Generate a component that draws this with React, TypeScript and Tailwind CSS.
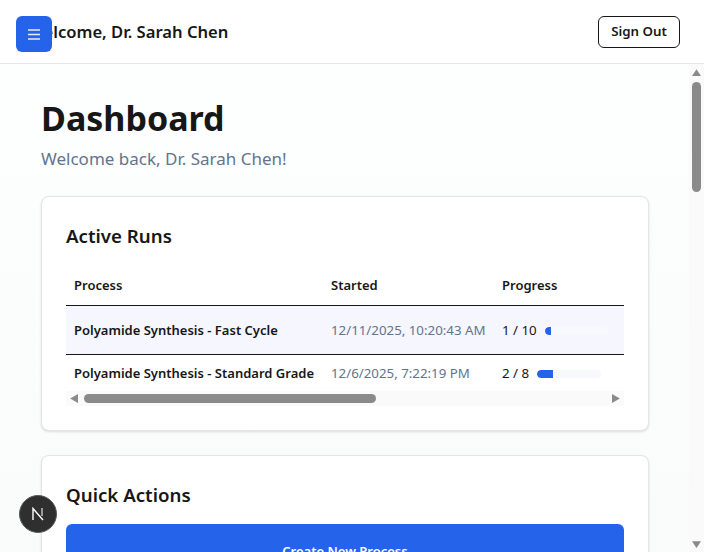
import React from 'react';

type Run = {
  name: string;
  started: string;
  done: number;
  total: number;
};

const runs: Run[] = [
  { name: 'Polyamide Synthesis - Fast Cycle', started: '12/11/2025, 10:20:43 AM', done: 1, total: 10 },
  { name: 'Polyamide Synthesis - Standard Grade', started: '12/6/2025, 7:22:19 PM', done: 2, total: 8 },
];

const Arrow = ({ points, className }: { points: string; className: string }) => (
  <svg viewBox="0 0 8 8" className={className} fill="#8a8a8a">
    <polygon points={points} />
  </svg>
);

const App = () => {
  return (
    <div className="relative h-[552px] w-[704px] overflow-hidden bg-white font-['Noto_Sans','Liberation_Sans',sans-serif] text-[#171717]">
      {/* Menu button */}
      <button className="absolute left-4 top-4 z-10 flex h-9 w-9 items-center justify-center rounded-md bg-[#2563eb]">
        <svg viewBox="0 0 12 11" className="h-[11px] w-3" stroke="#e8ecff" strokeWidth="1.3">
          <path d="M0 1h12M0 5.5h12M0 10h12" />
        </svg>
      </button>

      {/* Next badge */}
      <div className="absolute left-[19px] top-[495px] z-10 flex h-[38px] w-[38px] items-center justify-center rounded-full border border-[#5a5a5a] bg-[#2f2f2f]">
        <svg viewBox="0 0 14 14" className="h-[14px] w-[14px]" fill="none">
          <path d="M2 13V1.5L12 13" stroke="#ffffff" strokeWidth="1.4" />
          <path d="M11 1v8" stroke="#c9c9c9" strokeWidth="1.4" />
        </svg>
      </div>

      <header className="flex h-16 items-center justify-between border-b border-[#e5e5e5] pl-7 pr-6">
        <h2 className="pt-0.5 text-[16.6px] font-semibold">Welcome, Dr. Sarah Chen</h2>
        <button className="h-8 w-[82px] rounded-md border border-[#171717] text-[13.3px] font-semibold">Sign Out</button>
      </header>

      <div className="flex h-[488px]">
        <main className="w-[689px] overflow-hidden bg-linear-to-b from-[#fdfefe] to-[#fafbfb] pl-[41px] pr-10 pt-[34px]">
          <h1 className="text-[34px] font-bold leading-10">Dashboard</h1>
          <p className="mt-[7px] text-[17px] leading-7 text-[#64748b]">Welcome back, Dr. Sarah Chen!</p>

          <section className="mt-[23px] w-[608px] rounded-lg border border-[#e5e5e5] bg-white p-6 shadow-sm">
            <h3 className="text-[18.7px] font-semibold leading-[30px]">Active Runs</h3>
            <div className="mt-3 overflow-hidden">
              <table className="w-[1000px] table-fixed border-collapse text-left text-[13px]">
                <thead>
                  <tr className="h-[42px] border-b border-[#171717]">
                    <th className="w-[257px] px-2 pt-1 font-semibold">Process</th>
                    <th className="w-[171px] px-2 pt-1 font-semibold">Started</th>
                    <th className="px-2 pt-1 font-semibold">Progress</th>
                  </tr>
                </thead>
                <tbody>
                  {runs.map((run, i) => (
                    <tr key={run.name} className={i === 0 ? 'h-[49px] border-b border-[#171717] bg-[#f5f6fe]' : 'h-[37px]'}>
                      <td className="whitespace-nowrap px-2 pt-0.5 font-semibold">{run.name}</td>
                      <td className="whitespace-nowrap px-2 pt-0.5 text-[13.3px] text-[#64748b]">{run.started}</td>
                      <td className="px-2 pt-0.5">
                        <div className="flex items-center gap-2">
                          <span className="text-[13.3px]">
                            {run.done} / {run.total}
                          </span>
                          <div className="h-2 w-16 overflow-hidden rounded-full bg-[#f8f9fc]">
                            <div className="h-full rounded-l-full bg-[#2563eb]" style={{ width: `${(run.done / run.total) * 100}%` }} />
                          </div>
                        </div>
                      </td>
                    </tr>
                  ))}
                </tbody>
              </table>
              {/* Horizontal scrollbar */}
              <div className="flex h-[15px] items-center bg-[#fafafa] px-[3px]">
                <Arrow points="8,0 8,8 1,4" className="h-[9px] w-[9px]" />
                <div className="ml-[6px] h-[9px] w-[292px] rounded-full bg-[#8a8a8a]" />
                <Arrow points="0,0 0,8 7,4" className="ml-auto h-[9px] w-[9px]" />
              </div>
            </div>
          </section>

          <section className="mt-6 w-[608px] rounded-lg border border-[#e5e5e5] bg-white p-6 shadow-sm">
            <h3 className="text-[18.7px] font-semibold leading-[30px]">Quick Actions</h3>
            <button className="mt-[14px] h-[56px] w-full rounded-md bg-[#2563eb] text-[13px] font-semibold text-white">
              Create New Process
            </button>
          </section>
        </main>

        {/* Vertical scrollbar */}
        <div className="flex w-[15px] flex-col items-center bg-[#fafafa] pt-[4px]">
          <Arrow points="0,7 8,7 4,1" className="h-[9px] w-[9px]" />
          <div className="mt-[5px] h-[110px] w-[9px] rounded-full bg-[#8a8a8a]" />
          <Arrow points="0,1 8,1 4,7" className="mb-[3px] mt-auto h-[9px] w-[9px]" />
        </div>
      </div>
    </div>
  );
};

export default App;
